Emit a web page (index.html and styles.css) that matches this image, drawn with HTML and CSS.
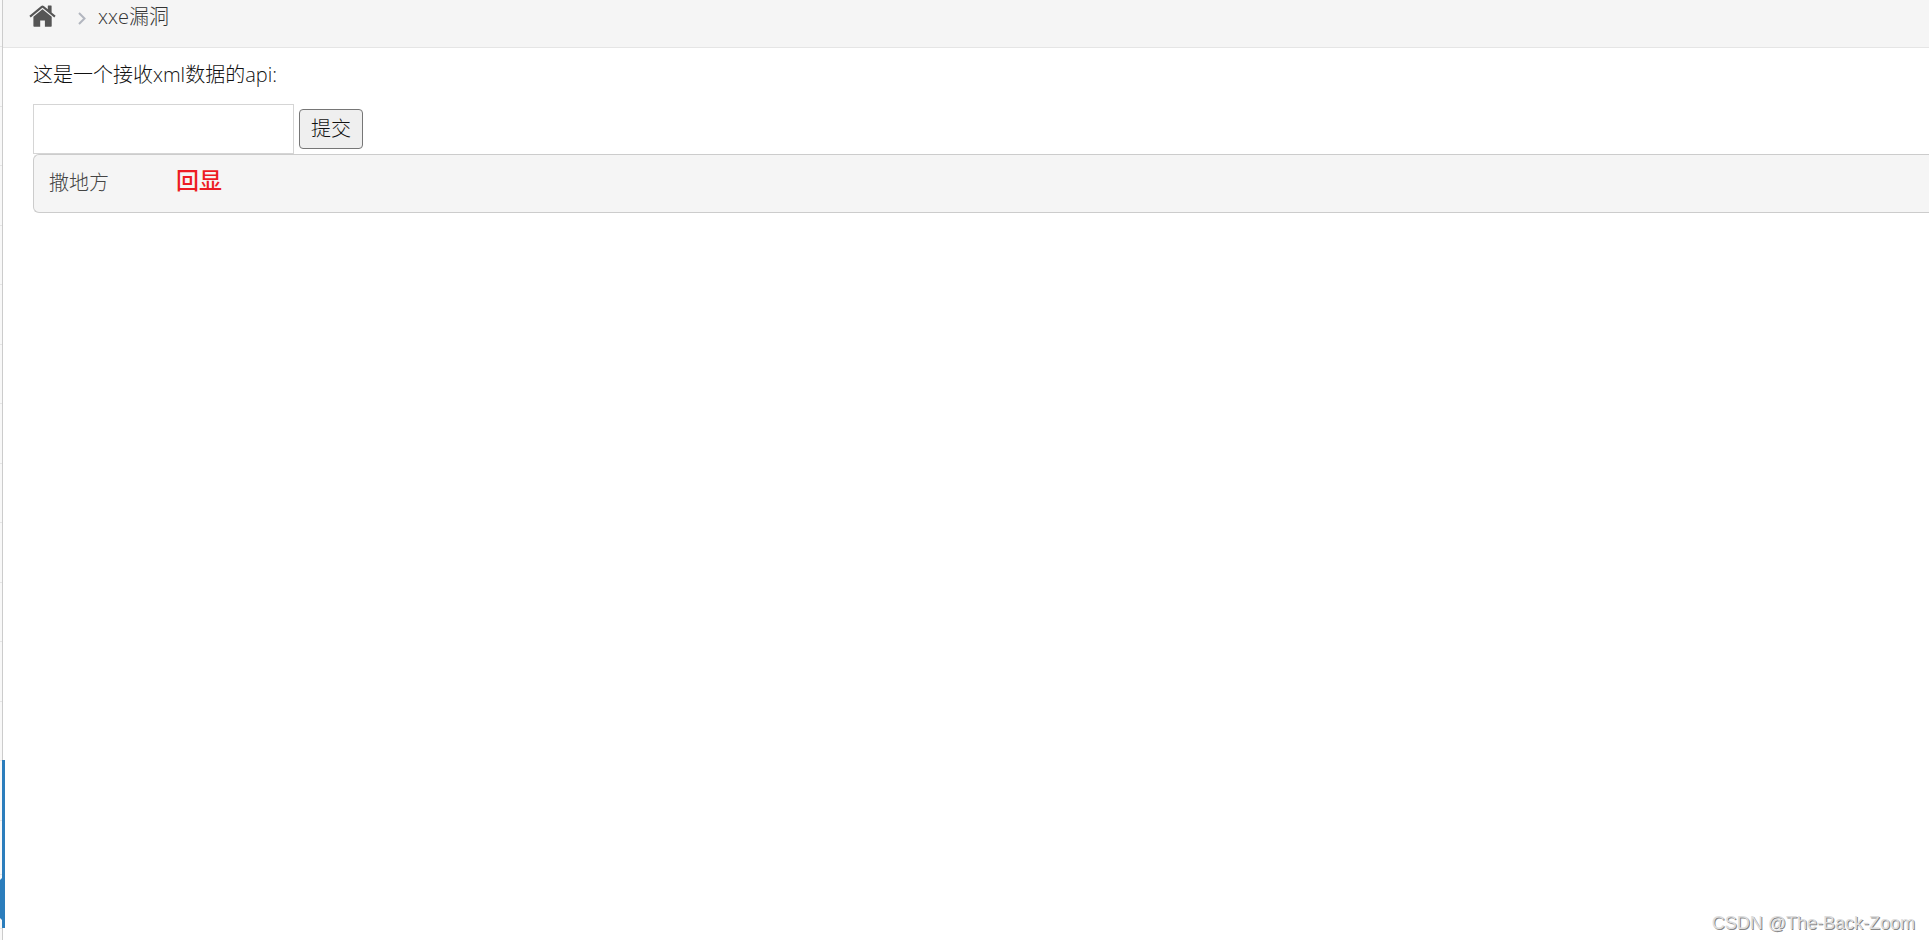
FILE: index.html
```html
<!DOCTYPE html>
<html lang="zh-CN">
<head>
    <meta charset="UTF-8">
    <meta name="viewport" content="width=device-width, initial-scale=1.0">
    <title>xxe漏洞</title>
    <link rel="stylesheet" href="styles.css">
</head>
<body>
    <div class="main-container">
        <div class="sidebar">
            <ul class="nav-list">
                <li></li><li></li><li></li><li></li><li></li><li></li><li></li>
                <li></li><li></li><li></li><li></li><li></li><li></li>
                <li class="open">
                    <div class="nav-head"></div>
                    <div class="submenu-item"></div>
                    <div class="submenu-item active"></div>
                </li>
            </ul>
        </div>
        <div class="main-content">
            <div class="breadcrumbs">
                <svg class="home-icon" viewBox="0 0 27 22">
                    <path d="M13.500 4.200 L22.700 11.800 V21 Q22.700 21.700 22 21.700 H15.900 V15.600 H11.200 V21.700 H5.100 Q4.400 21.700 4.400 21 V11.800 Z"/>
                    <path d="M0.400 10.800 L12.200 0.900 Q13.500 0 14.800 0.900 L18.800 4.300 V1.100 Q18.800 0.600 19.300 0.600 H22.100 Q22.600 0.600 22.600 1.100 V7.500 L26.600 10.800 L25.300 12.400 L13.500 2.700 L1.700 12.400 Z"/>
                </svg>
                <svg class="angle-icon" viewBox="0 0 8 13">
                    <path d="M1 1 L6.500 6.500 L1 12"/>
                </svg>
                <span class="crumb">xxe漏洞</span>
            </div>
            <div class="page-content">
                <form>
                    <label class="tip" for="xml">这是一个接收xml数据的api:</label>
                    <div class="form-row">
                        <input class="xml-input" type="text" id="xml" name="xml">
                        <button class="submit" type="button">提交</button>
                    </div>
                </form>
                <div class="result">
                    <pre>撒地方</pre>
                    <span class="note">回显</span>
                </div>
            </div>
        </div>
    </div>
    <div class="watermark">CSDN @The-Back-Zoom</div>
</body>
</html>
```

FILE: styles.css
```css
* { box-sizing: border-box; }
body {
    margin: 0;
    background-color: #fff;
    color: #111;
    font-family: "Open Sans", "Noto Sans CJK SC", sans-serif;
    font-size: 20px;
    font-weight: 300;
    line-height: 30px;
    overflow: hidden;
}
.main-container {
    display: flex;
    min-height: 100vh;
}

/* sidebar, only its edge is visible */
.sidebar {
    flex: none;
    width: 3px;
    background-color: #f8f8f8;
    border-right: 1px solid #ccc;
}
.nav-list {
    list-style: none;
    margin: 0;
    padding: 0;
}
.nav-list > li {
    height: 60px;
    border-bottom: 1px solid #e5e5e5;
}
.nav-list > li:nth-child(odd) { height: 59px; }
.nav-list > li:first-child { height: 47px; }
.nav-list > li.open {
    position: relative;
    height: auto;
}
.nav-list > li.open::after {
    content: "";
    position: absolute;
    top: -1px;
    bottom: 0;
    right: -3px;
    width: 3px;
    background-color: #2b7dbc;
}
.nav-head {
    height: 60px;
    border-bottom: 1px solid #e5e5e5;
}
.submenu-item {
    height: 54px;
    border-bottom: 1px solid #e5e5e5;
}
.submenu-item.active {
    position: relative;
    height: 53px;
    border-bottom: none;
}
.submenu-item.active::before {
    content: "";
    position: absolute;
    top: 3px;
    right: 0;
    width: 2px;
    height: 42px;
    background-color: #2b7dbc;
    clip-path: polygon(0 2px, 100% 0, 100% 100%, 0 40px);
}

.main-content {
    flex: 1;
    min-width: 0;
}
.breadcrumbs {
    display: flex;
    align-items: flex-start;
    height: 48px;
    padding: 2px 26px;
    background-color: #f5f5f5;
    border-bottom: 1px solid #e5e5e5;
    color: #333;
}
.home-icon {
    width: 27px;
    height: 22px;
    margin-top: 3px;
    fill: #555;
}
.angle-icon {
    width: 8px;
    height: 13px;
    margin: 10px 12px 0 22px;
    fill: none;
    stroke: #b2b6bf;
    stroke-width: 2;
}
.page-content { padding: 12px 0 0 30px; }
.tip {
    display: block;
    margin-bottom: 14px;
}
.form-row {
    display: flex;
    align-items: center;
    gap: 5px;
}
.xml-input {
    width: 261px;
    height: 50px;
    padding: 8px 6px;
    border: 1px solid #d5d5d5;
    font: inherit;
}
.submit {
    height: 40px;
    padding: 0 11px;
    border: 1px solid #767676;
    border-radius: 4px;
    background-color: #efefef;
    color: #111;
    font: inherit;
}
.result {
    display: flex;
    align-items: flex-start;
    height: 59px;
    padding: 12px 15px;
    border: 1px solid #ccc;
    border-right: none;
    border-radius: 6px 0 0 6px;
    background-color: #f5f5f5;
}
.result pre {
    margin: 0;
    color: #444;
    font-family: "Noto Sans CJK SC", monospace;
    font-size: 20px;
}
.note {
    margin-left: 67px;
    color: #ed1c24;
    font-size: 23px;
    font-weight: 500;
    line-height: 26px;
}
.watermark {
    position: absolute;
    right: 14px;
    bottom: 5px;
    color: #ddd;
    font-family: "Liberation Sans", Arial, sans-serif;
    font-size: 18px;
    font-weight: 400;
    line-height: 24px;
    text-shadow: 1px 1px 0 #888;
}
```
